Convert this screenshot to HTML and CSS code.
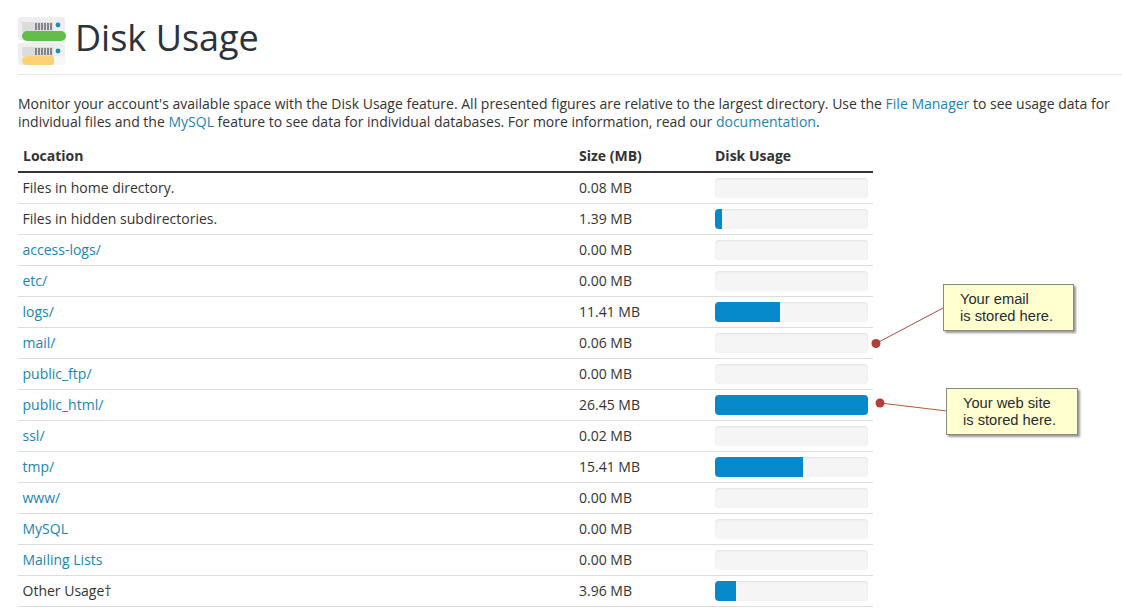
FILE: index.html
```html
<!DOCTYPE html>
<html>
  <head>
    <title>Disk Usage</title>
    <link rel="stylesheet" href="styles.css">
  </head>
  <body>
    <header class="page-header">
      <svg class="logo" width="50" height="50" viewBox="0 0 50 50">
        <rect x="0" y="1" width="47" height="23" rx="3" fill="#eeeeee"/>
        <rect x="4" y="6" width="31" height="10" fill="#dcdcdd"/>
        <path d="M18 7v7M21 7v7M24 7v7M27 7v7M30 7v7M33 7v7" stroke="#85868a" stroke-width="2"/>
        <circle cx="40" cy="9" r="2.400" fill="#1a8fb5"/>
        <rect x="4" y="15" width="44" height="10" rx="5" fill="#62bd4a"/>
        <rect x="0" y="27" width="47" height="22" rx="3" fill="#eeeeee"/>
        <rect x="4" y="31" width="31" height="9" fill="#dcdcdd"/>
        <path d="M18 32v7M21 32v7M24 32v7M27 32v7M30 32v7M33 32v7" stroke="#85868a" stroke-width="2"/>
        <circle cx="40" cy="35" r="2.400" fill="#1a8fb5"/>
        <rect x="4" y="40" width="44" height="9" rx="4.500" fill="#f7f7f7"/>
        <path d="M8.500 40H34a2 2 0 0 1 2 2v5a2 2 0 0 1-2 2H8.500a4.500 4.500 0 0 1 0-9z" fill="#fdd274"/>
      </svg>
      <h1>Disk Usage</h1>
    </header>

    <p class="intro">Monitor your account's available space with the Disk Usage feature. All presented figures are relative to the largest directory. Use the <a href="#">File Manager</a> to see usage data for individual files and the <a href="#">MySQL</a> feature to see data for individual databases. For more information, read our <a href="#">documentation</a>.</p>

    <table class="usage">
      <thead>
        <tr><th>Location</th><th>Size (MB)</th><th>Disk Usage</th></tr>
      </thead>
      <tbody>
        <tr><td>Files in home directory.</td><td>0.08 MB</td><td><div class="bar"></div></td></tr>
        <tr><td>Files in hidden subdirectories.</td><td>1.39 MB</td><td><div class="bar"><div class="fill" style="width:7px"></div></div></td></tr>
        <tr><td><a href="#">access-logs/</a></td><td>0.00 MB</td><td><div class="bar"></div></td></tr>
        <tr><td><a href="#">etc/</a></td><td>0.00 MB</td><td><div class="bar"></div></td></tr>
        <tr><td><a href="#">logs/</a></td><td>11.41 MB</td><td><div class="bar"><div class="fill" style="width:65px"></div></div></td></tr>
        <tr><td><a href="#">mail/</a></td><td>0.06 MB</td><td><div class="bar"></div></td></tr>
        <tr><td><a href="#">public_ftp/</a></td><td>0.00 MB</td><td><div class="bar"></div></td></tr>
        <tr><td><a href="#">public_html/</a></td><td>26.45 MB</td><td><div class="bar"><div class="fill" style="width:153px"></div></div></td></tr>
        <tr><td><a href="#">ssl/</a></td><td>0.02 MB</td><td><div class="bar"></div></td></tr>
        <tr><td><a href="#">tmp/</a></td><td>15.41 MB</td><td><div class="bar"><div class="fill" style="width:88px"></div></div></td></tr>
        <tr><td><a href="#">www/</a></td><td>0.00 MB</td><td><div class="bar"></div></td></tr>
        <tr><td><a href="#">MySQL</a></td><td>0.00 MB</td><td><div class="bar"></div></td></tr>
        <tr><td><a href="#">Mailing Lists</a></td><td>0.00 MB</td><td><div class="bar"></div></td></tr>
        <tr><td>Other Usage&dagger;</td><td>3.96 MB</td><td><div class="bar"><div class="fill" style="width:21px"></div></div></td></tr>
      </tbody>
    </table>

    <!-- annotations drawn over the screenshot -->
    <svg class="leaders" width="1122" height="615" viewBox="0 0 1122 615">
      <path d="M876 343.500L944 307.500" stroke="#a8503a" stroke-width="1"/>
      <circle cx="876" cy="343.500" r="4.500" fill="#b0403a"/>
      <path d="M880 403L947 411" stroke="#b5603a" stroke-width="1.200"/>
      <circle cx="880" cy="403" r="4.500" fill="#b0403a"/>
    </svg>
    <div class="note note-email">Your email<br>is stored here.</div>
    <div class="note note-site">Your web site<br>is stored here.</div>
  </body>
</html>
```

FILE: styles.css
```css
body{
  font-family: "Open Sans", sans-serif;
  font-size:14px;
  line-height:20px;
  color:#333;
  margin:0;
  padding:0 0 0 18px;
  background:#fff;
  overflow:hidden;
}
a{
  color:#1a85b2;
  text-decoration:none;
}
.page-header{
  display:flex;
  align-items:center;
  height:74px;
  margin-bottom:20px;
  border-bottom:1px solid #e8e8e8;
}
.logo{
  margin-top:8px;
}
h1{
  font-size:36px;
  font-weight:400;
  color:#2b323a;
  margin:2px 0 0 7px;
}
.intro{
  margin:0 0 10px;
  width:1104px;
  line-height:18px;
  color:#333;
}
.usage{
  width:855px;
  border-collapse:collapse;
  table-layout:fixed;
}
.usage th{
  text-align:left;
  font-weight:700;
  height:31px;
  padding:0 5px;
  box-sizing:border-box;
  border-bottom:2px solid #333;
  color:#333;
}
.usage td{
  height:31px;
  padding:0 5px;
  box-sizing:border-box;
  border-bottom:1px solid #ddd;
}
.usage td:first-child{
  padding-left:4.500px;
}
.usage th:nth-child(1){ width:556px; }
.usage th:nth-child(2){ width:136px; }
.bar{
  width:153px;
  height:20px;
  background:#f5f5f5;
  border-radius:4px;
  box-shadow:inset 0 1px 2px rgba(0,0,0,.08);
  overflow:hidden;
}
.fill{
  height:100%;
  background:#0689ca;
}
.leaders{
  position:absolute;
  left:0;
  top:0;
  pointer-events:none;
}
.note{
  position:absolute;
  box-sizing:border-box;
  font-family:"Liberation Sans", sans-serif;
  font-size:14.700px;
  line-height:17px;
  color:#1f2d33;
  background:#ffffcf;
  border:1px solid #8a8a78;
  box-shadow:2px 2px 2px #9a9a9a;
}
.note-email{
  left:943px;
  top:284px;
  width:131px;
  height:47px;
  padding:6px 0 0 16px;
}
.note-site{
  left:946px;
  top:388px;
  width:132px;
  height:47px;
  padding:6px 0 0 16px;
}
```
